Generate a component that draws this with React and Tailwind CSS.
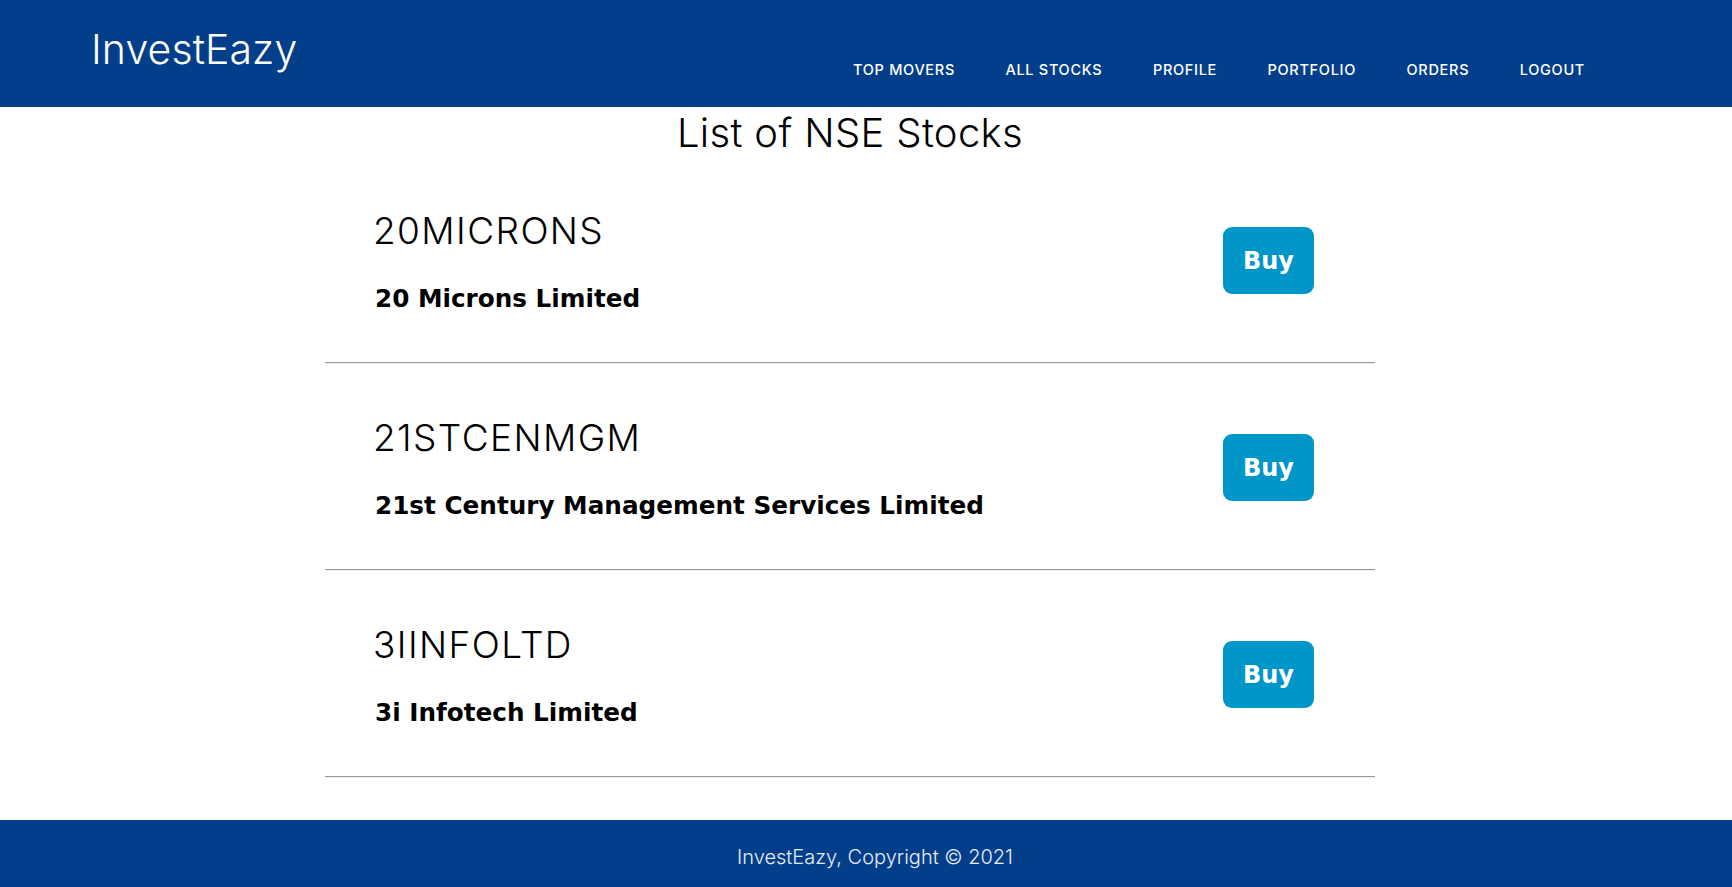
import React from "react";

const stocks = [
  { symbol: "20MICRONS", name: "20 Microns Limited" },
  { symbol: "21STCENMGM", name: "21st Century Management Services Limited" },
  { symbol: "3IINFOLTD", name: "3i Infotech Limited" },
];

const links = ["TOP MOVERS", "ALL STOCKS", "PROFILE", "PORTFOLIO", "ORDERS", "LOGOUT"];

export default function App() {
  return (
    <div className="min-h-screen flex flex-col bg-white font-['Inter',sans-serif]">
      <header className="h-[107px] bg-[#023e8a] flex items-start text-white">
        <div className="ml-[91px] mt-[25px] text-[41px] leading-[48px] font-light tracking-[0.1px]">InvestEazy</div>
        <nav className="ml-auto mr-[147px] mt-[60px] flex gap-[50.5px] text-[14.5px] leading-[20px] font-medium tracking-[0.7px]">
          {links.map((l) => (
            <a key={l} href="#" className="text-white">{l}</a>
          ))}
        </nav>
      </header>
      <main className="flex-1 w-[1050px] ml-[325px]">
        <h1 className="mt-[2px] text-center text-[40px] leading-[48px] font-light tracking-[0.35px] text-black">List of NSE Stocks</h1>
        {stocks.map((s) => (
          <div key={s.symbol}>
            <div className="flex items-center justify-between pl-[48px] pr-[61px] pt-[51px] pb-[49px]">
              <div>
                <div className="text-[37px] leading-[46px] font-light tracking-[1.4px] text-black">{s.symbol}</div>
                <div className="ml-[2px] mt-[30px] text-[24.7px] leading-[29px] font-bold text-black font-['DejaVu_Sans',sans-serif]">{s.name}</div>
              </div>
              <button className="w-[91px] h-[67px] rounded-[9px] bg-[#0096c7] text-white text-[24px] font-bold font-['DejaVu_Sans',sans-serif]">Buy</button>
            </div>
            <div className="border-t border-[#9a9a9a] border-b-[1px] border-b-[#eeeeee]"></div>
          </div>
        ))}
      </main>
      <footer className="h-[67px] bg-[#023e8a] flex items-center justify-center">
        <span className="ml-[18px] mt-[6px] text-[20px] font-light text-[#e6ecf5]">InvestEazy, Copyright © 2021</span>
      </footer>
    </div>
  );
}
